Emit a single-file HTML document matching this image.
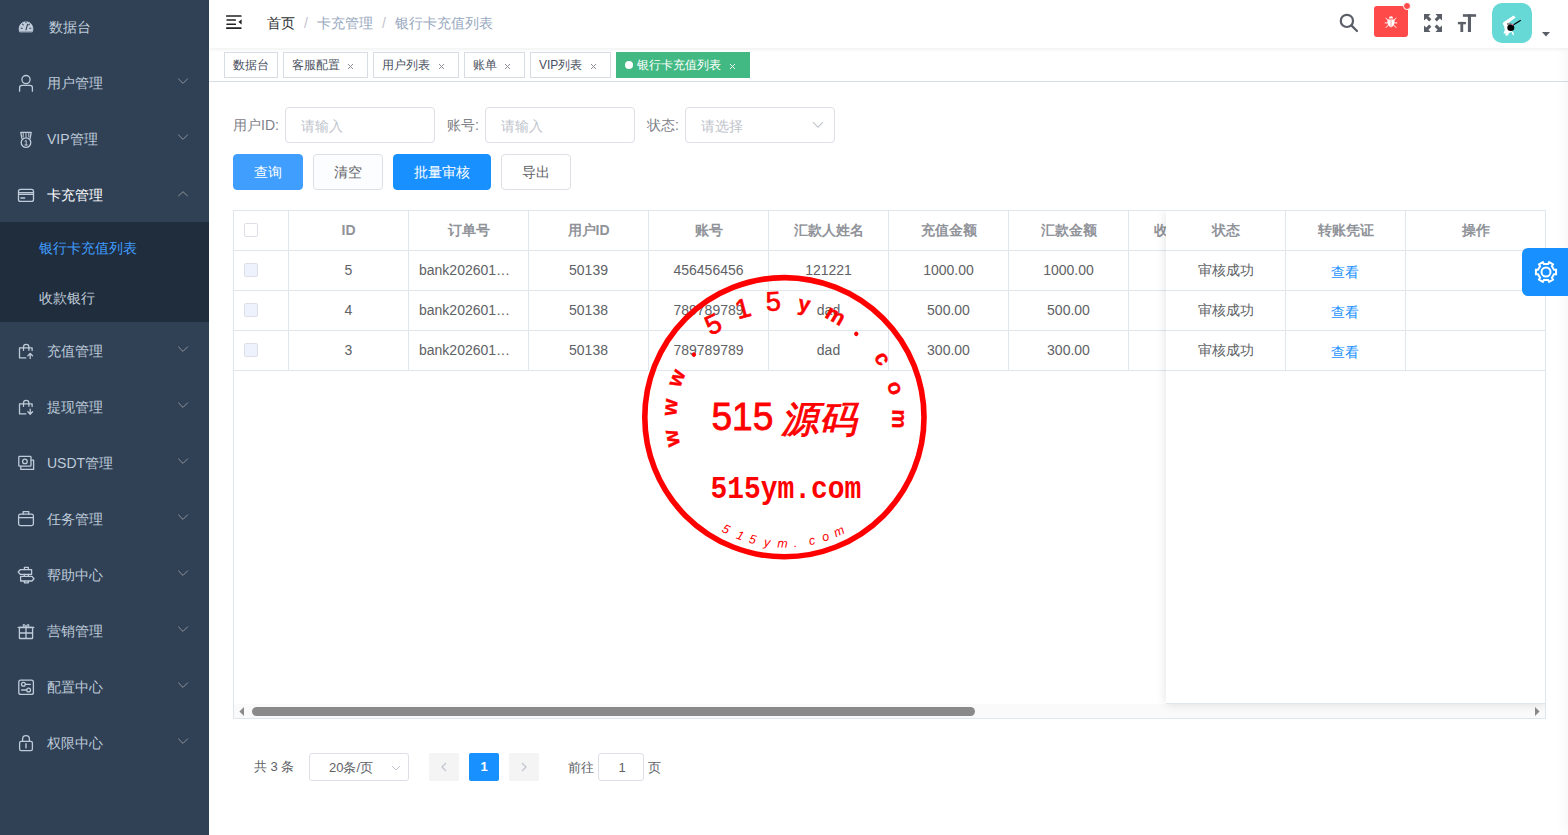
<!DOCTYPE html>
<html><head><meta charset="utf-8">
<style>
*{box-sizing:border-box;margin:0;padding:0}
html,body{width:1568px;height:835px;overflow:hidden;background:#fff;font-family:"Liberation Sans",sans-serif}
.abs{position:absolute}
#side{position:absolute;left:0;top:0;width:209px;height:835px;background:#304156}
.mi{position:absolute;left:0;width:209px;height:56px;line-height:56px;color:#bfcbd9;font-size:14px;white-space:nowrap}
.mi .tx{position:absolute;top:1px}
#sub{position:absolute;left:0;top:222px;width:209px;height:100px;background:#1f2d3d}
.si{position:absolute;left:39px;height:50px;line-height:50px;font-size:14px;color:#bfcbd9;padding-top:1px}
#nav{position:absolute;left:209px;top:0;width:1359px;height:48px;background:#fff;box-shadow:0 1px 4px rgba(0,21,41,.08);z-index:5}
#tags{position:absolute;left:209px;top:48px;width:1359px;height:34px;background:#fff;border-bottom:1px solid #d8dce5}
.tag{position:absolute;top:4px;height:26px;line-height:24px;border:1px solid #d8dce5;color:#495060;background:#fff;font-size:12px;padding:0 8px;white-space:nowrap}
.tag.act{background:#42b983;border-color:#42b983;color:#fff}
.tag.act:before{content:"";display:inline-block;width:8px;height:8px;border-radius:50%;background:#fff;margin-right:4px;vertical-align:0px}
.lbl{position:absolute;font-size:14px;color:#7e8187;line-height:36px;top:107px}
.inp{position:absolute;top:107px;width:150px;height:36px;border:1px solid #dcdfe6;border-radius:4px;font-size:14px;color:#c0c4cc;line-height:36px;padding-left:15px;background:#fff}
.btn{position:absolute;top:154px;height:36px;width:70px;border-radius:4px;font-size:14px;line-height:34px;text-align:center;border:1px solid #dcdfe6;color:#606266;background:#fff}
#tbl{position:absolute;left:233px;top:210px;width:1313px;height:509px;border:1px solid #dfe6ec}
.row{position:absolute;left:0;height:40px;width:1568px}
.row .c{position:absolute;top:0;height:40px;line-height:39px;text-align:center;font-size:14px;color:#606266;border-right:1px solid #dfe6ec;border-bottom:1px solid #dfe6ec;white-space:nowrap;overflow:hidden}
.hd .c{color:#909399;font-weight:bold}
.cb{position:absolute;top:12px;width:14px;height:14px;border:1px solid #dcdfe6;border-radius:2px;background:#fff}
.cbd{background:#edf2fc}
#fix{position:absolute;left:1166px;top:211px;width:379px;height:493px;background:#fff;box-shadow:0 0 10px rgba(0,0,0,.12);border-bottom:1px solid #dfe6ec}
#fix .row{width:379px}
.link{color:#1890ff}
.pg{position:absolute;top:753px;height:28px;line-height:28px;font-size:13px;color:#606266}
</style></head><body>

<div id="side">
<div class="mi" style="top:-2px;"><svg class="ic" width="30" height="30" viewBox="0 0 30 30" style="position:absolute;left:12px;top:14px" fill="none" stroke="#bfcbd9" stroke-width="1.3" stroke-linecap="round" stroke-linejoin="round"><path d="M7.6,19.6 A7,7 0 1 1 20.4,19.6 Z" fill="#bfcbd9" stroke="#bfcbd9" stroke-width="0.8"/><g stroke="#304156" stroke-width="1.1"><path d="M14,17.8 L15.6,12.2"/><path d="M9.2,16.2 h1"/><path d="M17.8,16.2 h1"/><path d="M10.6,12.2 l0.6,0.6"/><path d="M17.4,12.2 l-0.6,0.6"/><path d="M14,9.8 v0.8"/></g></svg><span class="tx" style="left:49px">数据台</span></div>
<div class="mi" style="top:54px;"><svg class="ic" width="30" height="30" viewBox="0 0 30 30" style="position:absolute;left:12px;top:14px" fill="none" stroke="#bfcbd9" stroke-width="1.3" stroke-linecap="round" stroke-linejoin="round"><circle cx="14" cy="11.6" r="4.1"/><path d="M7.6,23.2 V19.6 Q7.6,17.4 10,17.4 H18 Q20.4,17.4 20.4,19.6 V23.2"/></svg><span class="tx" style="left:47px">用户管理</span><svg class="ar" width="12" height="8" viewBox="0 0 12 8" style="position:absolute;left:177px;top:24px" fill="none" stroke="#909399" stroke-width="1"><path d="M1.2,0.6 L6,5.4 L10.8,0.6"/></svg></div>
<div class="mi" style="top:110px;"><svg class="ic" width="30" height="30" viewBox="0 0 30 30" style="position:absolute;left:12px;top:14px" fill="none" stroke="#bfcbd9" stroke-width="1.3" stroke-linecap="round" stroke-linejoin="round"><g transform="translate(0,1)"><circle cx="14" cy="17.6" r="4.8"/><path d="M9.9,13.4 L8.8,7.3 H19.2 L18.1,13.4"/><path d="M11.2,7.6 V12 M14,7.6 V12 M16.8,7.6 V12" stroke-width="1"/><path d="M13,16.2 L14.2,15.4 V20 M12.8,20 H15.4" stroke-width="1"/></g></svg><span class="tx" style="left:47px">VIP管理</span><svg class="ar" width="12" height="8" viewBox="0 0 12 8" style="position:absolute;left:177px;top:24px" fill="none" stroke="#909399" stroke-width="1"><path d="M1.2,0.6 L6,5.4 L10.8,0.6"/></svg></div>
<div class="mi" style="top:166px;color:#ffffff;"><svg class="ic" width="30" height="30" viewBox="0 0 30 30" style="position:absolute;left:12px;top:14px" fill="none" stroke="#bfcbd9" stroke-width="1.3" stroke-linecap="round" stroke-linejoin="round"><rect x="6.5" y="9.4" width="15" height="12" rx="2"/><path d="M6.8,12.6 H21.2 M6.8,14.4 H21.2" stroke-width="1.1"/><path d="M9,18 H12.6" stroke-width="1.6"/></svg><span class="tx" style="left:47px">卡充管理</span><svg class="ar" width="12" height="8" viewBox="0 0 12 8" style="position:absolute;left:177px;top:24px" fill="none" stroke="#909399" stroke-width="1"><path d="M1.2,6.2 L6,1.7 L10.8,6.2"/></svg></div>
<div class="mi" style="top:322px;"><svg class="ic" width="30" height="30" viewBox="0 0 30 30" style="position:absolute;left:12px;top:14px" fill="none" stroke="#bfcbd9" stroke-width="1.3" stroke-linecap="round" stroke-linejoin="round"><path d="M13.8,21.9 H7.5 V11.9 H20.1 V14.5 M11.5,14.3 V11 A2.7,2.7 0 0 1 16.9,11 V14.3"/><path d="M18.2,22.4 V17.6 M15.9,19.8 L18.2,17.4 L20.5,19.8"/></svg><span class="tx" style="left:47px">充值管理</span><svg class="ar" width="12" height="8" viewBox="0 0 12 8" style="position:absolute;left:177px;top:24px" fill="none" stroke="#909399" stroke-width="1"><path d="M1.2,0.6 L6,5.4 L10.8,0.6"/></svg></div>
<div class="mi" style="top:378px;"><svg class="ic" width="30" height="30" viewBox="0 0 30 30" style="position:absolute;left:12px;top:14px" fill="none" stroke="#bfcbd9" stroke-width="1.3" stroke-linecap="round" stroke-linejoin="round"><path d="M13.8,21.9 H7.5 V11.9 H20.1 V14.5 M11.5,14.3 V11 A2.7,2.7 0 0 1 16.9,11 V14.3"/><path d="M18.2,17.2 V22 M15.9,19.8 L18.2,22.2 L20.5,19.8"/></svg><span class="tx" style="left:47px">提现管理</span><svg class="ar" width="12" height="8" viewBox="0 0 12 8" style="position:absolute;left:177px;top:24px" fill="none" stroke="#909399" stroke-width="1"><path d="M1.2,0.6 L6,5.4 L10.8,0.6"/></svg></div>
<div class="mi" style="top:434px;"><svg class="ic" width="30" height="30" viewBox="0 0 30 30" style="position:absolute;left:12px;top:14px" fill="none" stroke="#bfcbd9" stroke-width="1.3" stroke-linecap="round" stroke-linejoin="round"><rect x="6.8" y="8.4" width="12.2" height="9.8" rx="0.8"/><circle cx="12.9" cy="13.4" r="2.3"/><path d="M19.2,12.2 H21.6 V21.4 H8.8 V18.4"/></svg><span class="tx" style="left:47px">USDT管理</span><svg class="ar" width="12" height="8" viewBox="0 0 12 8" style="position:absolute;left:177px;top:24px" fill="none" stroke="#909399" stroke-width="1"><path d="M1.2,0.6 L6,5.4 L10.8,0.6"/></svg></div>
<div class="mi" style="top:490px;"><svg class="ic" width="30" height="30" viewBox="0 0 30 30" style="position:absolute;left:12px;top:14px" fill="none" stroke="#bfcbd9" stroke-width="1.3" stroke-linecap="round" stroke-linejoin="round"><rect x="6.6" y="10.2" width="14.8" height="11.4" rx="1.8"/><path d="M6.8,13.6 H21.2"/><path d="M11.2,10 V7.6 H16.8 V10"/></svg><span class="tx" style="left:47px">任务管理</span><svg class="ar" width="12" height="8" viewBox="0 0 12 8" style="position:absolute;left:177px;top:24px" fill="none" stroke="#909399" stroke-width="1"><path d="M1.2,0.6 L6,5.4 L10.8,0.6"/></svg></div>
<div class="mi" style="top:546px;"><svg class="ic" width="30" height="30" viewBox="0 0 30 30" style="position:absolute;left:12px;top:14px" fill="none" stroke="#bfcbd9" stroke-width="1.3" stroke-linecap="round" stroke-linejoin="round"><path d="M8.2,9.7 H19.6 V14.3 H8.2 L6.2,12 Z"/><path d="M8.6,16.4 H20 L22,18.7 L20,21 H8.6 Z"/><path d="M12.4,9.5 V7.4 H16.4 V9.5 M12.4,14.4 V16.3 M16.4,14.4 V16.3 M12.4,21.2 V22.8 H16.4 V21.2"/></svg><span class="tx" style="left:47px">帮助中心</span><svg class="ar" width="12" height="8" viewBox="0 0 12 8" style="position:absolute;left:177px;top:24px" fill="none" stroke="#909399" stroke-width="1"><path d="M1.2,0.6 L6,5.4 L10.8,0.6"/></svg></div>
<div class="mi" style="top:602px;"><svg class="ic" width="30" height="30" viewBox="0 0 30 30" style="position:absolute;left:12px;top:14px" fill="none" stroke="#bfcbd9" stroke-width="1.3" stroke-linecap="round" stroke-linejoin="round"><path d="M6.2,11.4 H21.8"/><rect x="7.4" y="11.5" width="13.2" height="11" rx="0.6"/><path d="M14,11.6 V22.4 M7.6,17 H20.4"/><path d="M14,10.8 C12.2,7 9.8,9 12,10.8 M14,10.8 C15.8,7 18.2,9 16,10.8" stroke-width="1.1"/></svg><span class="tx" style="left:47px">营销管理</span><svg class="ar" width="12" height="8" viewBox="0 0 12 8" style="position:absolute;left:177px;top:24px" fill="none" stroke="#909399" stroke-width="1"><path d="M1.2,0.6 L6,5.4 L10.8,0.6"/></svg></div>
<div class="mi" style="top:658px;"><svg class="ic" width="30" height="30" viewBox="0 0 30 30" style="position:absolute;left:12px;top:14px" fill="none" stroke="#bfcbd9" stroke-width="1.3" stroke-linecap="round" stroke-linejoin="round"><rect x="6.8" y="8.2" width="14.6" height="14.2" rx="2"/><circle cx="11.4" cy="12.3" r="1.9"/><path d="M13.4,12.3 H18.4 M9.6,18 H14.6"/><circle cx="16.6" cy="18" r="1.9"/></svg><span class="tx" style="left:47px">配置中心</span><svg class="ar" width="12" height="8" viewBox="0 0 12 8" style="position:absolute;left:177px;top:24px" fill="none" stroke="#909399" stroke-width="1"><path d="M1.2,0.6 L6,5.4 L10.8,0.6"/></svg></div>
<div class="mi" style="top:714px;"><svg class="ic" width="30" height="30" viewBox="0 0 30 30" style="position:absolute;left:12px;top:14px" fill="none" stroke="#bfcbd9" stroke-width="1.3" stroke-linecap="round" stroke-linejoin="round"><rect x="7.6" y="13.4" width="12.8" height="9.2" rx="1.6"/><path d="M10.6,13.2 V11 A3.4,3.4 0 0 1 17.4,11 V13.2"/><path d="M14,15.8 V19.8" stroke-width="1.4"/></svg><span class="tx" style="left:47px">权限中心</span><svg class="ar" width="12" height="8" viewBox="0 0 12 8" style="position:absolute;left:177px;top:24px" fill="none" stroke="#909399" stroke-width="1"><path d="M1.2,0.6 L6,5.4 L10.8,0.6"/></svg></div>
  <div id="sub">
    <div class="si" style="top:0;color:#409eff">银行卡充值列表</div>
    <div class="si" style="top:50px">收款银行</div>
  </div>
</div>

<div id="nav">
  <svg class="abs" style="left:16px;top:13px" width="18" height="18" viewBox="0 0 18 18" fill="#222"><rect x="1" y="2.2" width="15.6" height="1.6" rx=".6"/><rect x="1.4" y="6.2" width="9.6" height="1.6" rx=".6"/><rect x="1.4" y="10.4" width="9.6" height="1.6" rx=".6"/><rect x="1" y="14.3" width="15.6" height="1.6" rx=".6"/><path d="M16.6,6.2 V11.6 L13.4,8.9 Z"/></svg>
  <div class="abs" style="left:58px;top:-1px;line-height:48px;font-size:14px;color:#303133;white-space:nowrap">首页<span style="color:#c0c4cc;margin:0 9px">/</span><span style="color:#97a8be">卡充管理</span><span style="color:#c0c4cc;margin:0 9px">/</span><span style="color:#97a8be">银行卡充值列表</span></div>
  <!-- right icons -->
  <svg class="abs" style="left:1129px;top:12px" width="22" height="22" viewBox="0 0 22 22" fill="none" stroke="#5a5e66" stroke-width="2.2" stroke-linecap="round"><circle cx="8.9" cy="8.9" r="6.1"/><path d="M13.6,13.6 L19,19"/></svg>
  <div class="abs" style="left:1165px;top:6px;width:34px;height:31px;border-radius:3px;background:#ff4a4a"></div>
  <svg class="abs" style="left:1174px;top:14px" width="16" height="16" viewBox="0 0 16 16"><path d="M5.9,4.5 A2.1,2.2 0 0 1 10.1,4.5 Z" fill="#fff"/><path d="M4.5,5.4 H11.5 Q12.2,11.4 8,13.4 Q3.8,11.4 4.5,5.4 Z" fill="#fff"/><path d="M8,5.6 V13" stroke="#ff9a9a" stroke-width="0.9"/><path d="M4.9,6.2 L2.9,4.2 M11.1,6.2 L13.1,4.2 M4.5,8.9 H2.2 M11.5,8.9 H13.8 M5,11.4 L3,13.5 M11,11.4 L13,13.5" stroke="#fff" stroke-width="1" stroke-linecap="round"/></svg>
  <div class="abs" style="left:1194px;top:2px;width:8px;height:8px;border-radius:50%;background:#ff4a4a;border:1px solid #fff;box-sizing:border-box"></div>
  <svg class="abs" style="left:1214px;top:13px" width="20" height="20" viewBox="0 0 20 20" fill="#5a5e66"><path d="M1,1 H7.6 L5.4,3.2 L8.4,6.2 L6.2,8.4 L3.2,5.4 L1,7.6 Z"/><path d="M19,1 H12.4 L14.6,3.2 L11.6,6.2 L13.8,8.4 L16.8,5.4 L19,7.6 Z"/><path d="M1,19 H7.6 L5.4,16.8 L8.4,13.8 L6.2,11.6 L3.2,14.6 L1,12.4 Z"/><path d="M19,19 H12.4 L14.6,16.8 L11.6,13.8 L13.8,11.6 L16.8,14.6 L19,12.4 Z"/></svg>
  <svg class="abs" style="left:1248px;top:14px" width="20" height="20" viewBox="0 0 20 20" fill="#5a5e66"><rect x="5.9" y="0.2" width="13.2" height="2.6"/><rect x="10.9" y="0.2" width="3.1" height="17.8"/><rect x="0.9" y="7.9" width="8" height="2.4"/><rect x="3.4" y="7.9" width="2.8" height="10.1"/></svg>
  <div class="abs" style="left:1283px;top:3px;width:40px;height:40px;border-radius:10px;background:#66d9d6;overflow:hidden">
    <svg width="40" height="40" viewBox="0 0 40 40"><path d="M11,19.5 L21.6,12.6 L23.6,14.6 L15.5,20.8 Z" fill="#fff"/><path d="M10.6,20.6 Q12,18.4 15,19.2 L18.5,20.2 L21,23.2 L20,28.8 L17,30 L15.8,32.6 L13.2,32.4 L13.8,30.2 L11.4,30.8 L12.8,27 L12,23 Z" fill="#fff"/><path d="M19.6,29 L21,32.6 L22,31.8 L21.2,28.4 Z" fill="#fff"/><ellipse cx="18.8" cy="24.8" rx="3.5" ry="3.3" fill="#000"/><path d="M21.6,21.8 L28.8,17.2" stroke="#000" stroke-width="1.1"/><path d="M15,21 H19.4" stroke="#000" stroke-width="0.9"/><circle cx="20.4" cy="21.6" r="0.8" fill="#f6a"/></svg>
  </div>
  <svg class="abs" style="left:1332px;top:31px" width="10" height="7" viewBox="0 0 10 7" fill="#5a5e66"><path d="M1,1 H9 L5,5.5 Z"/></svg>
</div>

<div id="tags">
  <div class="tag" style="left:15px;width:54px">数据台</div>
  <div class="tag" style="left:74px;width:85px">客服配置<svg class="abs" style="right:13px;top:10px" width="7" height="7" viewBox="0 0 7 7" stroke="#8f9199" stroke-width="1"><path d="M1,1 L6,6 M6,1 L1,6"/></svg></div>
  <div class="tag" style="left:164px;width:86px">用户列表<svg class="abs" style="right:13px;top:10px" width="7" height="7" viewBox="0 0 7 7" stroke="#8f9199" stroke-width="1"><path d="M1,1 L6,6 M6,1 L1,6"/></svg></div>
  <div class="tag" style="left:255px;width:61px">账单<svg class="abs" style="right:13px;top:10px" width="7" height="7" viewBox="0 0 7 7" stroke="#8f9199" stroke-width="1"><path d="M1,1 L6,6 M6,1 L1,6"/></svg></div>
  <div class="tag" style="left:321px;width:81px">VIP列表<svg class="abs" style="right:13px;top:10px" width="7" height="7" viewBox="0 0 7 7" stroke="#8f9199" stroke-width="1"><path d="M1,1 L6,6 M6,1 L1,6"/></svg></div>
  <div class="tag act" style="left:407px;width:134px">银行卡充值列表<svg class="abs" style="right:13px;top:10px" width="7" height="7" viewBox="0 0 7 7" stroke="#e8f6ef" stroke-width="1"><path d="M1,1 L6,6 M6,1 L1,6"/></svg></div>
</div>

<div class="lbl" style="left:233px">用户ID:</div>
<div class="inp" style="left:285px">请输入</div>
<div class="lbl" style="left:447px">账号:</div>
<div class="inp" style="left:485px">请输入</div>
<div class="lbl" style="left:647px">状态:</div>
<div class="inp" style="left:685px">请选择<svg class="abs" style="left:126px;top:13px" width="12" height="8" viewBox="0 0 12 8" fill="none" stroke="#c0c4cc" stroke-width="1.1"><path d="M1,1.2 L6,6.2 L11,1.2"/></svg></div>

<div class="btn" style="left:233px;background:#409eff;border-color:#409eff;color:#fff">查询</div>
<div class="btn" style="left:313px;background:#fcfdff">清空</div>
<div class="btn" style="left:393px;width:98px;background:#1890ff;border-color:#1890ff;color:#fff">批量审核</div>
<div class="btn" style="left:501px">导出</div>

<div id="tbl"></div>
<div class="row hd" style="top:211px">
<div class="c" style="left:234px;width:55px;"><span class="cb" style="left:10px"></span></div>
<div class="c" style="left:289px;width:120px;">ID</div>
<div class="c" style="left:409px;width:120px;">订单号</div>
<div class="c" style="left:529px;width:120px;">用户ID</div>
<div class="c" style="left:649px;width:120px;">账号</div>
<div class="c" style="left:769px;width:120px;">汇款人姓名</div>
<div class="c" style="left:889px;width:120px;">充值金额</div>
<div class="c" style="left:1009px;width:120px;">汇款金额</div>
<div class="c" style="left:1129px;width:120px;">收款人姓名</div>
</div>
<div class="row" style="top:251px">
<div class="c" style="left:234px;width:55px;"><span class="cb cbd" style="left:10px"></span></div>
<div class="c" style="left:289px;width:120px;">5</div>
<div class="c" style="left:409px;width:120px;text-align:left;padding-left:10px">bank202601…</div>
<div class="c" style="left:529px;width:120px;">50139</div>
<div class="c" style="left:649px;width:120px;">456456456</div>
<div class="c" style="left:769px;width:120px;">121221</div>
<div class="c" style="left:889px;width:120px;">1000.00</div>
<div class="c" style="left:1009px;width:120px;">1000.00</div>
<div class="c" style="left:1129px;width:120px;"></div>
</div>
<div class="row" style="top:291px">
<div class="c" style="left:234px;width:55px;"><span class="cb cbd" style="left:10px"></span></div>
<div class="c" style="left:289px;width:120px;">4</div>
<div class="c" style="left:409px;width:120px;text-align:left;padding-left:10px">bank202601…</div>
<div class="c" style="left:529px;width:120px;">50138</div>
<div class="c" style="left:649px;width:120px;">789789789</div>
<div class="c" style="left:769px;width:120px;">dad</div>
<div class="c" style="left:889px;width:120px;">500.00</div>
<div class="c" style="left:1009px;width:120px;">500.00</div>
<div class="c" style="left:1129px;width:120px;"></div>
</div>
<div class="row" style="top:331px">
<div class="c" style="left:234px;width:55px;"><span class="cb cbd" style="left:10px"></span></div>
<div class="c" style="left:289px;width:120px;">3</div>
<div class="c" style="left:409px;width:120px;text-align:left;padding-left:10px">bank202601…</div>
<div class="c" style="left:529px;width:120px;">50138</div>
<div class="c" style="left:649px;width:120px;">789789789</div>
<div class="c" style="left:769px;width:120px;">dad</div>
<div class="c" style="left:889px;width:120px;">300.00</div>
<div class="c" style="left:1009px;width:120px;">300.00</div>
<div class="c" style="left:1129px;width:120px;"></div>
</div>
<!-- scrollbar -->
<div class="abs" style="left:234px;top:704px;width:1311px;height:14px;background:#fafafa"></div>
<svg class="abs" style="left:236px;top:705px" width="10" height="12" viewBox="0 0 10 12" fill="#8a8a8a"><path d="M8,2 V11 L3.4,6.5 Z"/></svg>
<div class="abs" style="left:252px;top:707px;width:723px;height:9px;border-radius:5px;background:#8a8a8a"></div>
<svg class="abs" style="left:1533px;top:705px" width="10" height="12" viewBox="0 0 10 12" fill="#8a8a8a"><path d="M2,2 V11 L6.6,6.5 Z"/></svg>

<div style="position:absolute;left:234px;top:211px;width:1311px;height:507px;overflow:hidden"><div style="position:absolute;left:-234px;top:-211px;width:1568px;height:835px"><div id="fix"></div>
<div class="row hd" style="top:211px;left:1166px;width:379px">
<div class="c" style="left:0px;width:120px;">状态</div>
<div class="c" style="left:120px;width:120px;">转账凭证</div>
<div class="c" style="left:240px;width:139px;border-right:none">操作</div>
</div>
<div class="row" style="top:251px;left:1166px;width:379px">
<div class="c" style="left:0px;width:120px;">审核成功</div>
<div class="c" style="left:120px;width:120px;"><span class="link" style="position:relative;top:2px;left:-1px">查看</span></div>
<div class="c" style="left:240px;width:139px;border-right:none"></div>
</div>
<div class="row" style="top:291px;left:1166px;width:379px">
<div class="c" style="left:0px;width:120px;">审核成功</div>
<div class="c" style="left:120px;width:120px;"><span class="link" style="position:relative;top:2px;left:-1px">查看</span></div>
<div class="c" style="left:240px;width:139px;border-right:none"></div>
</div>
<div class="row" style="top:331px;left:1166px;width:379px">
<div class="c" style="left:0px;width:120px;">审核成功</div>
<div class="c" style="left:120px;width:120px;"><span class="link" style="position:relative;top:2px;left:-1px">查看</span></div>
<div class="c" style="left:240px;width:139px;border-right:none"></div>
</div>
</div></div>
<!-- pagination -->
<div class="pg" style="left:254px">共 3 条</div>
<div class="abs" style="left:309px;top:753px;width:100px;height:28px;border:1px solid #dcdfe6;border-radius:3px;font-size:13px;color:#606266;line-height:26px;padding-left:19px;padding-top:1px">20条/页<svg class="abs" style="left:81px;top:11px" width="10" height="7" viewBox="0 0 10 7" fill="none" stroke="#c0c4cc" stroke-width="1"><path d="M1,1 L5,5 L9,1"/></svg></div>
<div class="abs" style="left:429px;top:753px;width:30px;height:28px;background:#f4f4f5;border-radius:2px"><svg class="abs" style="left:11px;top:9px" width="8" height="10" viewBox="0 0 8 10" fill="none" stroke="#c0c4cc" stroke-width="1.2"><path d="M6,1 L2,5 L6,9"/></svg></div>
<div class="abs" style="left:469px;top:753px;width:30px;height:28px;background:#1890ff;border-radius:2px;color:#fff;font-size:13px;font-weight:bold;line-height:28px;text-align:center">1</div>
<div class="abs" style="left:509px;top:753px;width:30px;height:28px;background:#f4f4f5;border-radius:2px"><svg class="abs" style="left:11px;top:9px" width="8" height="10" viewBox="0 0 8 10" fill="none" stroke="#c0c4cc" stroke-width="1.2"><path d="M2,1 L6,5 L2,9"/></svg></div>
<div class="pg" style="left:568px;top:754px">前往</div>
<div class="abs" style="left:598px;top:753px;width:46px;height:28px;border:1px solid #dcdfe6;border-radius:3px;font-size:13px;color:#606266;line-height:26px;text-align:center;padding-top:1px;padding-left:2px">1</div>
<div class="pg" style="left:648px;top:754px">页</div>

<!-- right panel shadow -->
<div class="abs" style="left:1568px;top:0;width:260px;height:835px;box-shadow:0 0 15px 0 rgba(0,0,0,.05);background:#fff"></div>
<!-- settings button -->
<div class="abs" style="left:1522px;top:248px;width:48px;height:48px;border-radius:6px 0 0 6px;background:#1890ff">
<svg class="abs" style="left:12px;top:12px" width="24" height="24" viewBox="0 0 24 24" fill="none" stroke="#fff" stroke-width="2" stroke-linejoin="miter"><path d="M20.00,9.80 L22.10,9.80 L22.10,14.20 L20.00,14.20 L17.91,17.83 L18.96,19.65 L15.14,21.85 L14.10,20.03 L9.90,20.03 L8.86,21.85 L5.04,19.65 L6.09,17.83 L4.00,14.20 L1.90,14.20 L1.90,9.80 L4.00,9.80 L6.09,6.17 L5.04,4.35 L8.86,2.15 L9.90,3.97 L14.10,3.97 L15.14,2.15 L18.96,4.35 L17.91,6.17 Z"/><circle cx="12" cy="12" r="4.5"/></svg>
</div>

<svg style="position:absolute;left:0;top:0" width="1568" height="835" viewBox="0 0 1568 835" font-family="Liberation Sans, sans-serif">
<g transform="translate(784.4,417.2)">
<circle cx="0" cy="0" r="139.6" fill="none" stroke="#f00" stroke-width="5.6"/>
<g transform="rotate(-100.6) translate(0,-113.5) rotate(0.0)"><text x="0" y="5.6" font-size="21.5" font-weight="bold" text-anchor="middle" fill="#f00" stroke="#f00" stroke-width="0.4">w</text></g>
<g transform="rotate(-85.1) translate(0,-113.5) rotate(0.0)"><text x="0" y="5.6" font-size="21.5" font-weight="bold" text-anchor="middle" fill="#f00" stroke="#f00" stroke-width="0.4">w</text></g>
<g transform="rotate(-70.2) translate(0,-113.5) rotate(2.200000000000003)"><text x="0" y="5.6" font-size="21.5" font-weight="bold" text-anchor="middle" fill="#f00" stroke="#f00" stroke-width="0.4">w</text></g>
<g transform="rotate(-55.3)"><circle cx="0" cy="-110" r="2.2" fill="#f00"/></g>
<g transform="rotate(-37.4) translate(0,-117.5) rotate(12.399999999999999)"><text x="0" y="9.7" font-size="27" text-anchor="middle" fill="#f00" stroke="#f00" stroke-width="0.7">5</text></g>
<g transform="rotate(-20.9) translate(0,-117) rotate(5.899999999999999)"><text x="0" y="9.7" font-size="27" text-anchor="middle" fill="#f00" stroke="#f00" stroke-width="0.7">1</text></g>
<g transform="rotate(-5.5) translate(0,-116.7) rotate(2.5)"><text x="0" y="9.7" font-size="27" text-anchor="middle" fill="#f00" stroke="#f00" stroke-width="0.7">5</text></g>
<g transform="rotate(10.0) translate(0,-113.5) rotate(0.0)"><text x="0" y="5.6" font-size="21.5" font-weight="bold" text-anchor="middle" fill="#f00" stroke="#f00" stroke-width="0.4">y</text></g>
<g transform="rotate(26.7) translate(0,-112.5) rotate(3.3000000000000007)"><text x="0" y="5.6" font-size="21.5" font-weight="bold" text-anchor="middle" fill="#f00" stroke="#f00" stroke-width="0.4">m</text></g>
<g transform="rotate(40.8)"><circle cx="0" cy="-110" r="2.2" fill="#f00"/></g>
<g transform="rotate(59.1) translate(0,-113) rotate(-0.10000000000000142)"><text x="0" y="5.6" font-size="21.5" font-weight="bold" text-anchor="middle" fill="#f00" stroke="#f00" stroke-width="0.4">c</text></g>
<g transform="rotate(75.3) translate(0,-113.5) rotate(-0.29999999999999716)"><text x="0" y="5.6" font-size="21.5" font-weight="bold" text-anchor="middle" fill="#f00" stroke="#f00" stroke-width="0.4">o</text></g>
<g transform="rotate(90.9) translate(0,-113.5) rotate(0.09999999999999432)"><text x="0" y="5.6" font-size="21.5" font-weight="bold" text-anchor="middle" fill="#f00" stroke="#f00" stroke-width="0.4">m</text></g>
<g transform="rotate(-332.5)"><text x="0" y="130.5" font-size="12.5" font-style="italic" text-anchor="middle" fill="#f00">5</text></g>
<g transform="rotate(-339.5)"><text x="0" y="130.5" font-size="12.5" font-style="italic" text-anchor="middle" fill="#f00">1</text></g>
<g transform="rotate(-345.4)"><text x="0" y="130.5" font-size="12.5" font-style="italic" text-anchor="middle" fill="#f00">5</text></g>
<g transform="rotate(-352.2)"><text x="0" y="130.5" font-size="12.5" font-style="italic" text-anchor="middle" fill="#f00">y</text></g>
<g transform="rotate(-359.1)"><text x="0" y="130.5" font-size="12.5" font-style="italic" text-anchor="middle" fill="#f00">m</text></g>
<g transform="rotate(-5.0)"><text x="0" y="130.5" font-size="12.5" font-style="italic" text-anchor="middle" fill="#f00">.</text></g>
<g transform="rotate(-12.6)"><text x="0" y="130.5" font-size="12.5" font-style="italic" text-anchor="middle" fill="#f00">c</text></g>
<g transform="rotate(-18.9)"><text x="0" y="130.5" font-size="12.5" font-style="italic" text-anchor="middle" fill="#f00">o</text></g>
<g transform="rotate(-25.5)"><text x="0" y="130.5" font-size="12.5" font-style="italic" text-anchor="middle" fill="#f00">m</text></g>
<text x="-73" y="13" font-size="38" fill="#f00" stroke="#f00" stroke-width="0.8" textLength="62" lengthAdjust="spacingAndGlyphs">515</text>
<text x="-3" y="15" font-size="37" fill="#f00" stroke="#f00" stroke-width="0.9" font-style="italic" textLength="75" lengthAdjust="spacingAndGlyphs">源码</text>
<text x="-74" y="81" font-size="31" fill="#f00" font-weight="bold" font-family="Liberation Mono, monospace" textLength="151" lengthAdjust="spacingAndGlyphs">515ym.com</text>
</g></svg>
</body></html>
